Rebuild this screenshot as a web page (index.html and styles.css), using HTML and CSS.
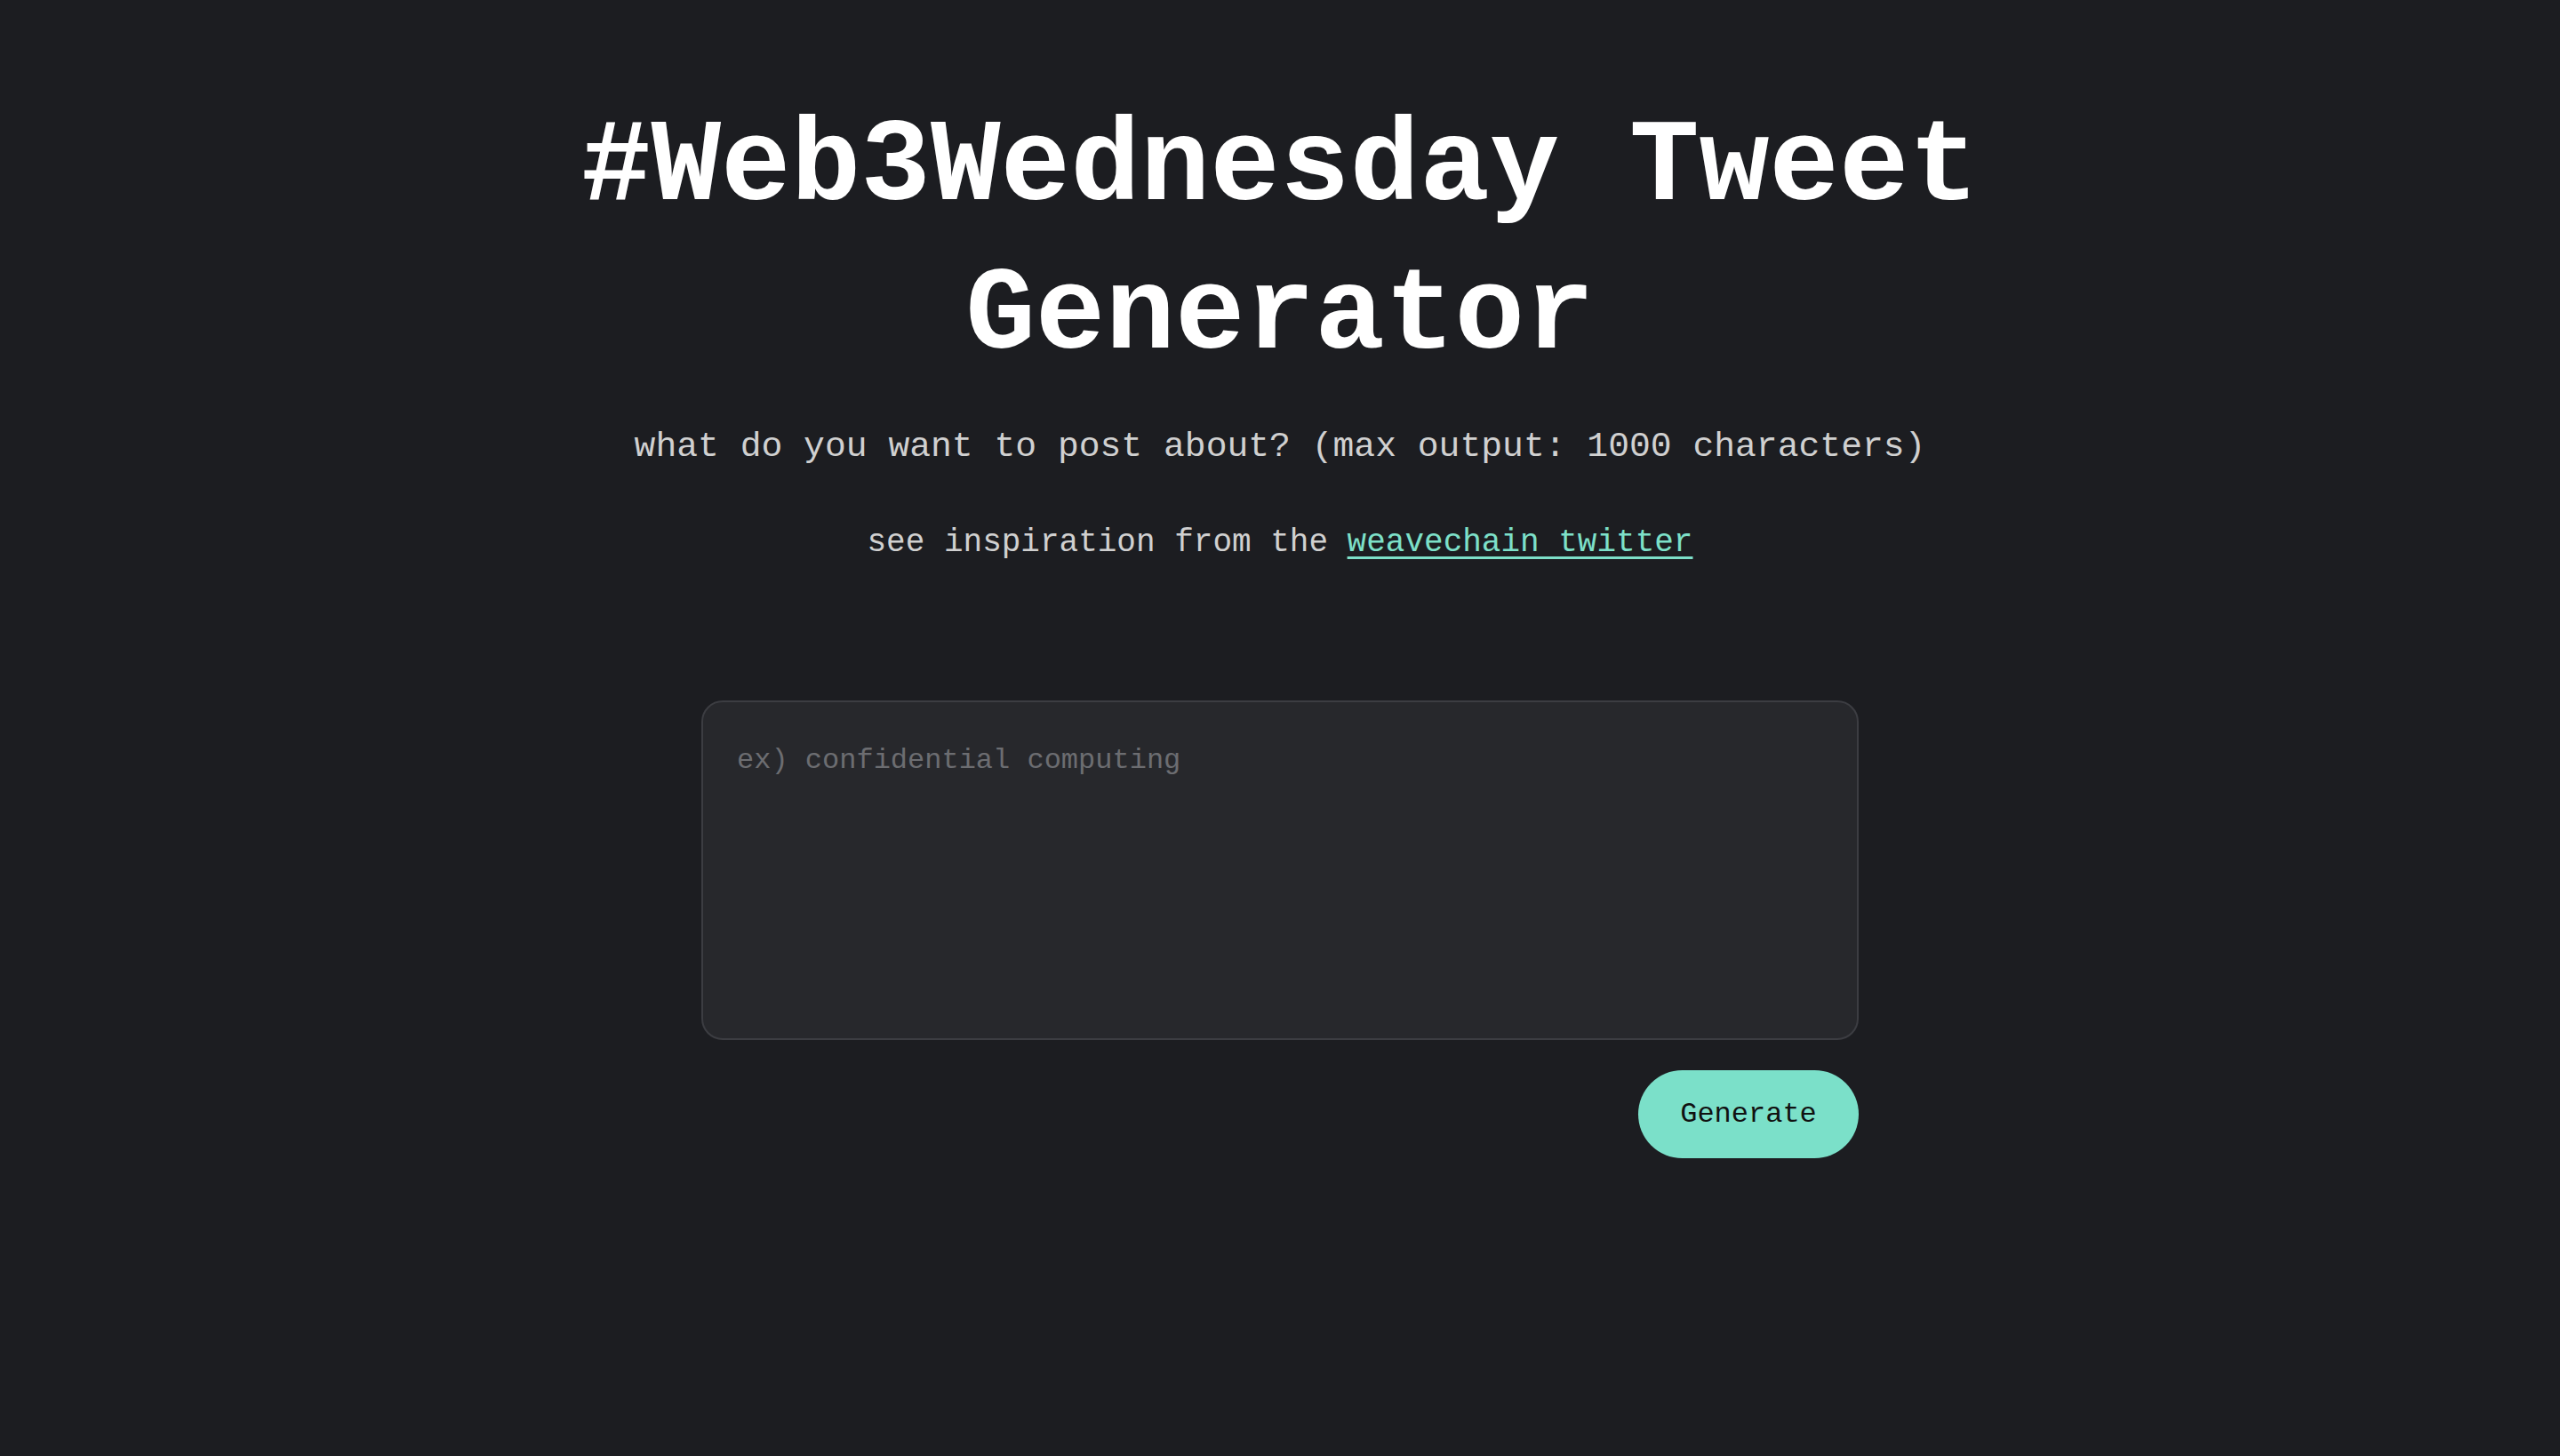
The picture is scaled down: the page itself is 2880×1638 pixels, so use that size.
FILE: index.html
```html
<!DOCTYPE html>
<html lang="en">
<head>
<meta charset="utf-8">
<title>#Web3Wednesday Tweet Generator</title>
<link rel="stylesheet" href="styles.css">
</head>
<body>
<main class="page">
  <h1 class="title">#Web3Wednesday Tweet Generator</h1>
  <p class="subtitle">what do you want to post about? (max output: 1000 characters)</p>
  <p class="inspire">see inspiration from the <a class="link" href="#">weavechain twitter</a></p>
  <div class="form">
    <textarea class="input" placeholder="ex) confidential computing"></textarea>
    <div class="actions">
      <button class="btn" type="button">Generate</button>
    </div>
  </div>
</main>
</body>
</html>
```
FILE: styles.css
```css
html, body {
  margin: 0;
  padding: 0;
  background: #1c1d21;
  min-height: 100%;
}
body {
  font-family: "Courier New", Courier, "Nimbus Mono PS", "FreeMono", "Liberation Mono", monospace;
  color: #d4d4d4;
}
.page {
  display: flex;
  flex-direction: column;
  align-items: center;
  padding-top: 106px;
}
.title {
  margin: 0;
  width: 1700px;
  text-align: center;
  font-size: 131px;
  line-height: 167px;
  font-weight: 700;
  color: #ffffff;
}
.subtitle {
  margin: 33px 0 0;
  font-size: 39.7px;
  line-height: 60px;
  color: #d0d0d0;
  text-align: center;
}
.inspire {
  margin: 51px 0 0;
  font-size: 36px;
  line-height: 54px;
  color: #d0d0d0;
  text-align: center;
}
.link {
  color: #7de0c9;
  text-decoration: underline;
  text-underline-offset: 6px;
  text-decoration-thickness: 3px;
}
.form {
  margin-top: 150px;
  width: 1302px;
  display: flex;
  flex-direction: column;
}
.input {
  box-sizing: border-box;
  width: 1302px;
  height: 382px;
  padding: 42px 38px 36px;
  border: 2px solid #3c3d42;
  border-radius: 24px;
  background: #27282c;
  color: #d0d0d0;
  font-family: "Courier New", Courier, "Nimbus Mono PS", "FreeMono", "Liberation Mono", monospace;
  font-size: 32px;
  line-height: 48px;
  resize: none;
  outline: none;
}
.input::placeholder {
  color: #6c6d71;
}
.actions {
  display: flex;
  justify-content: flex-end;
  margin-top: 34px;
}
.btn {
  width: 248px;
  height: 99px;
  border: none;
  border-radius: 50px;
  background: #7be0c9;
  color: #111;
  font-family: "Courier New", Courier, "Nimbus Mono PS", "FreeMono", "Liberation Mono", monospace;
  font-size: 32px;
  cursor: pointer;
}
```
